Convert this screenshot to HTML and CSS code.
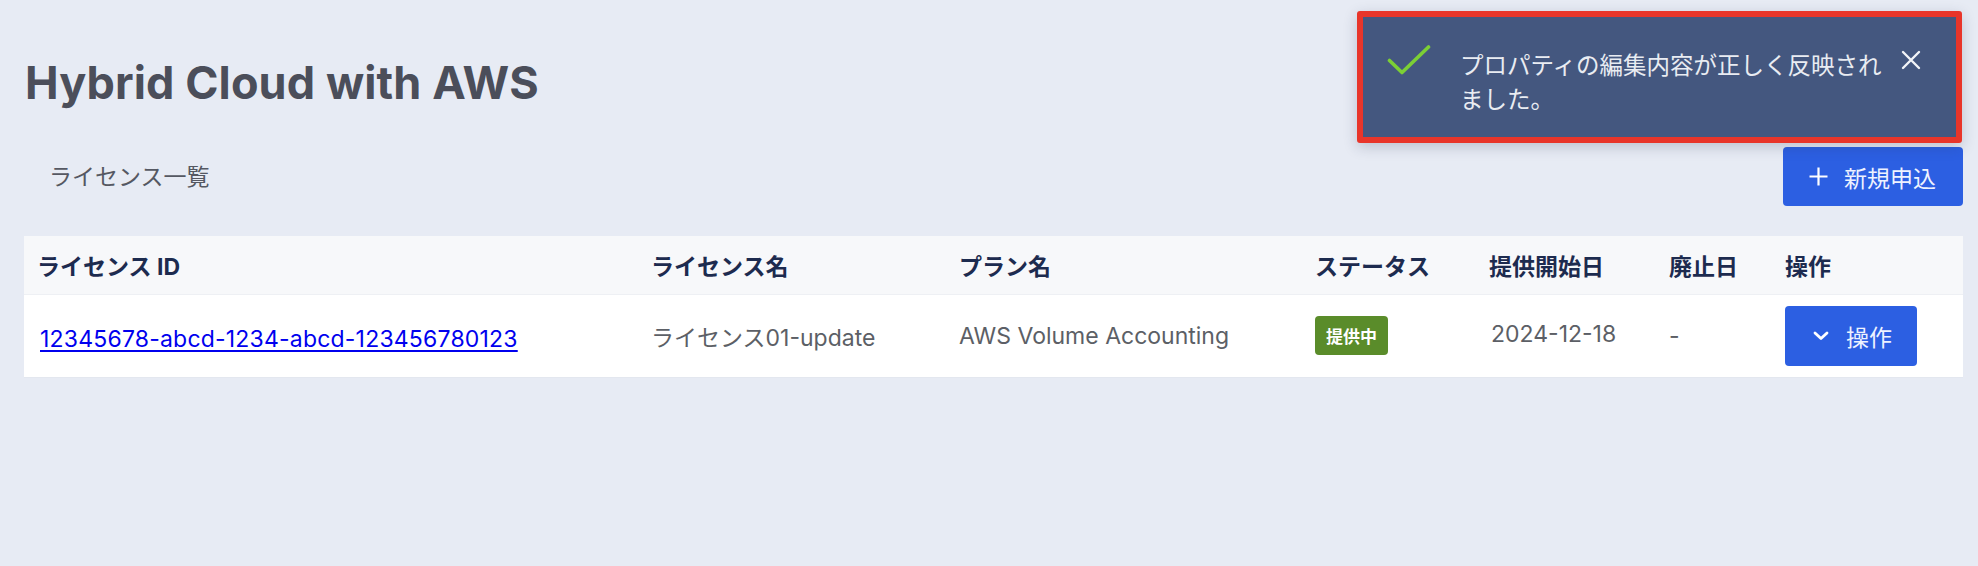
FILE: index.html
```html
<!DOCTYPE html>
<html lang="ja">
<head>
<meta charset="utf-8">
<title>Hybrid Cloud with AWS</title>
<link rel="stylesheet" href="styles.css">
</head>
<body>
<div class="page">
  <h1 class="title">Hybrid Cloud with AWS</h1>
  <div class="toolbar">
    <div class="breadcrumb">ライセンス一覧</div>
    <button class="btn btn-new" type="button">
      <svg class="plus" width="19" height="19" viewBox="0 0 19 19" aria-hidden="true"><path d="M9.5 0.5V18.5M0.5 9.5H18.5" stroke="#fff" stroke-width="2.2" fill="none"/></svg>
      <span>新規申込</span>
    </button>
  </div>
  <table class="grid">
    <colgroup>
      <col class="c1"><col class="c2"><col class="c3"><col class="c4"><col class="c5"><col class="c6"><col class="c7">
    </colgroup>
    <thead>
      <tr>
        <th>ライセンス ID</th>
        <th>ライセンス名</th>
        <th>プラン名</th>
        <th>ステータス</th>
        <th>提供開始日</th>
        <th>廃止日</th>
        <th>操作</th>
      </tr>
    </thead>
    <tbody>
      <tr>
        <td class="id-cell"><a href="#">12345678-abcd-1234-abcd-123456780123</a></td>
        <td>ライセンス01-update</td>
        <td>AWS Volume Accounting</td>
        <td><span class="badge">提供中</span></td>
        <td class="date">2024-12-18</td>
        <td>-</td>
        <td>
          <button class="btn btn-op" type="button">
            <svg class="chev" width="16" height="10" viewBox="0 0 16 10" aria-hidden="true"><path d="M2 2L8 7.6L14 2" stroke="#fff" stroke-width="2.8" fill="none" stroke-linecap="round" stroke-linejoin="round"/></svg>
            <span>操作</span>
          </button>
        </td>
      </tr>
    </tbody>
  </table>
</div>

<div class="toast" role="status">
  <svg class="toast-check" width="44" height="32" viewBox="0 0 44 32" aria-hidden="true"><path d="M2.5 16.5L15 28.5L41.5 3" stroke="#7ccf35" stroke-width="3.6" fill="none" stroke-linecap="round" stroke-linejoin="round"/></svg>
  <p class="toast-text">プロパティの編集内容が正しく反映されました。</p>
  <svg class="toast-close" width="20" height="20" viewBox="0 0 20 20" aria-hidden="true"><path d="M2 2L18 18M18 2L2 18" stroke="#f2f4f8" stroke-width="2.4" fill="none" stroke-linecap="round"/></svg>
</div>
</body>
</html>
```

FILE: styles.css
```css
html, body {
  margin: 0;
  padding: 0;
}

body {
  background: #e7ebf4;
  font-family: "Inter", "Noto Sans CJK JP", sans-serif;
  font-size: 23px;
  color: #5b5e66;
  width: 1978px;
  height: 566px;
  overflow: hidden;
}

.page {
  padding: 57px 15px 0 24px;
}

.title {
  margin: 0 0 0 1px;
  font-size: 45px;
  line-height: 52px;
  font-weight: 700;
  color: #4b4e5a;
  letter-spacing: 0.1px;
}

.toolbar {
  margin-top: 38px;
  display: flex;
  align-items: center;
  justify-content: space-between;
}

.breadcrumb {
  padding-left: 25px;
  color: #555862;
  font-size: 23px;
  line-height: 34px;
}

.btn {
  display: inline-flex;
  align-items: center;
  border: 0;
  border-radius: 4px;
  background: #2c5fe2;
  color: #eef2ff;
  font-family: "Inter", "Noto Sans CJK JP", sans-serif;
  font-size: 23px;
  cursor: pointer;
}

.btn-new {
  height: 59px;
  width: 180px;
  padding: 0 0 0 26px;
  gap: 16px;
}

.btn-op {
  height: 60px;
  width: 132px;
  padding: 0 0 0 28px;
  gap: 17px;
}

.grid {
  margin-top: 30px;
  width: 1939px;
  border-collapse: collapse;
  table-layout: fixed;
  background: #ffffff;
}

.c1 { width: 614px; }
.c2 { width: 308px; }
.c3 { width: 356px; }
.c4 { width: 174px; }
.c5 { width: 180px; }
.c6 { width: 116px; }
.c7 { width: 191px; }

.grid th {
  background: #f7f8fa;
  height: 58px;
  padding: 0 0 0 13px;
  text-align: left;
  font-weight: 700;
  color: #1d2b4f;
  font-size: 23px;
  border-bottom: 1px solid #eef0f4;
  box-sizing: border-box;
}

.grid td {
  height: 83px;
  padding: 0 0 0 13px;
  text-align: left;
  vertical-align: middle;
  color: #5c5f66;
  border-bottom: 1px solid #e3e7ef;
  box-sizing: border-box;
}

.grid td.id-cell {
  padding-top: 6px;
  padding-left: 16px;
}

.grid td.date {
  padding-left: 15px;
  padding-bottom: 4px;
}

.grid a {
  color: #0000ee;
  text-decoration: underline;
  text-underline-offset: 3px;
  letter-spacing: 0.2px;
}

.badge {
  display: inline-flex;
  align-items: center;
  height: 39px;
  padding: 0 11px;
  border-radius: 4px;
  background: #5a8c2a;
  color: #ffffff;
  font-size: 17px;
  font-weight: 700;
}

.toast {
  position: absolute;
  top: 11px;
  left: 1357px;
  width: 605px;
  height: 132px;
  box-sizing: border-box;
  border: 6px solid #e8352a;
  border-radius: 3px;
  background: #44577f;
  box-shadow: 0 4px 14px rgba(40, 50, 80, 0.22);
  display: flex;
  align-items: flex-start;
  padding: 27px 0 0 24px;
}

.toast-check {
  flex: 0 0 44px;
}

.toast-text {
  margin: 5px 0 0 29px;
  flex: 0 0 430px;
  color: #e9ecf2;
  font-size: 23.5px;
  line-height: 34px;
}

.toast-close {
  flex: 0 0 20px;
  margin: 6px 0 0 11px;
}
```
